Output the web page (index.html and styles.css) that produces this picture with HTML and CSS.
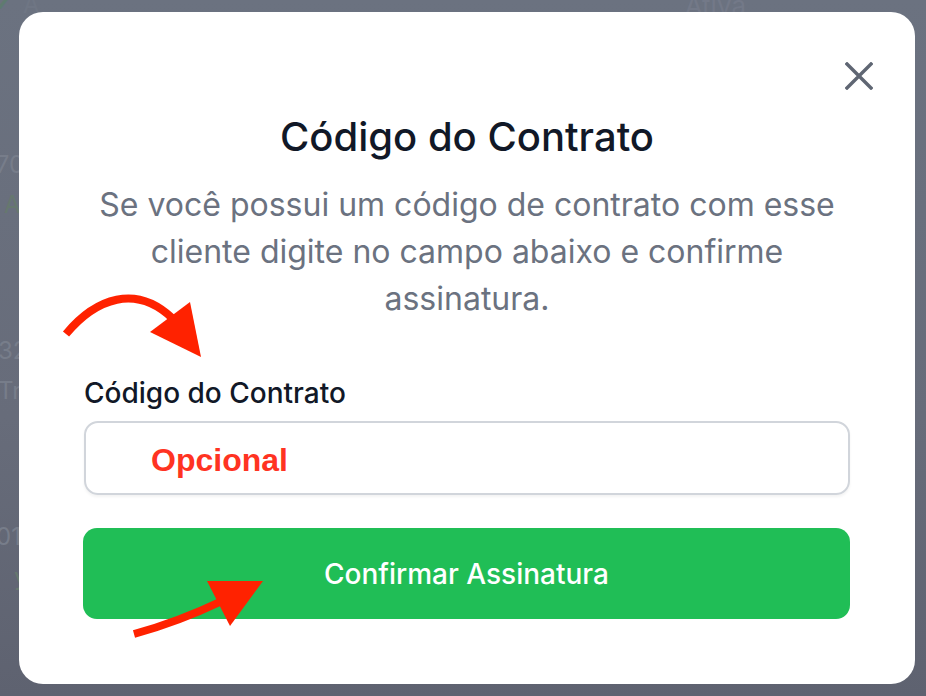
FILE: index.html
```html
<!DOCTYPE html>
<html lang="pt-BR">
<head>
<meta charset="utf-8">
<title>Código do Contrato</title>
<link rel="stylesheet" href="styles.css">
</head>
<body>
<div class="backdrop">
  <div class="bd-top"><span class="bd-check">✔</span><span class="bd-a">A</span><span class="bd-status">Ativa</span></div>
  <div class="bd-row bd-r1"><span>170</span><span class="bd-green">A</span></div>
  <div class="bd-row bd-r2"><span>32</span><span>Tr</span></div>
  <div class="bd-row bd-r3"><span>01</span><span class="bd-green">y A</span></div>
  <div class="bd-bottom"><span class="bd-ring"></span></div>
</div>
<div class="overlay">
  <div class="modal">
    <button class="close" aria-label="Fechar">
      <svg width="28" height="28" viewBox="0 0 28 28"><path d="M2 2L26 26M26 2L2 26" stroke="#5f6673" stroke-width="3.4" stroke-linecap="square"/></svg>
    </button>
    <h2 class="title">Código do Contrato</h2>
    <p class="desc">Se você possui um código de contrato com esse cliente digite no campo abaixo e confirme assinatura.</p>
    <label class="label" for="code">Código do Contrato</label>
    <div class="input"><span class="placeholder">Opcional</span></div>
    <button class="confirm">Confirmar Assinatura</button>
  </div>
</div>
<svg class="annot" width="926" height="696" viewBox="0 0 926 696">
  <path d="M66 334 C 96 298 136 284 172 318" fill="none" stroke="#ff2200" stroke-width="8"/>
  <polygon points="190,302 150,332 201,357" fill="#ff2200"/>
  <path d="M134 634 Q 178 622 222 601" fill="none" stroke="#ff2200" stroke-width="8"/>
  <polygon points="207,581 263,581 230,626" fill="#ff2200"/>
</svg>
</body>
</html>
```
FILE: styles.css
```css
* { box-sizing: border-box; }
html, body { margin: 0; padding: 0; }
body {
  width: 926px;
  height: 696px;
  overflow: hidden;
  font-family: Inter, "Noto Sans", sans-serif;
  background: linear-gradient(180deg, #6b7280 0%, #676c7a 60%, #5e6270 100%);
}
.backdrop {
  height: 696px;
  display: flex;
  flex-direction: column;
  color: #777d8a;
  font-size: 24px;
}
.bd-top {
  display: flex;
  align-items: flex-start;
  height: 160px;
  margin-top: -10px;
}
.bd-check { color: #5f7b70; margin-left: -6px; width: 29px; font-size: 22px; }
.bd-a { color: #6f7684; }
.bd-status { margin-left: auto; margin-right: 180px; color: #737988; font-size: 26px; }
.bd-row {
  display: flex;
  flex-direction: column;
  gap: 10px;
  margin-left: -14px;
  line-height: 30px;
}
.bd-r1 { height: 186px; }
.bd-r2 { height: 186px; margin-left: -2px; }
.bd-r3 { height: 130px; margin-left: -4px; }
.bd-green { color: #66786f; padding-left: 18px; }
.bd-bottom { display: flex; padding-left: 683px; }
.bd-ring { width: 20px; height: 20px; border: 4px solid #6a6f7c; border-radius: 50%; }

.overlay {
  position: fixed;
  inset: 0;
  display: flex;
  align-items: center;
  justify-content: center;
  padding-left: 8px;
}
.modal {
  position: relative;
  width: 896px;
  height: 672px;
  background: #fff;
  border-radius: 24px;
  padding: 101px 65px 65px 65px;
  display: flex;
  flex-direction: column;
}
.close {
  position: absolute;
  top: 50px;
  right: 42px;
  border: 0;
  background: none;
  padding: 0;
  width: 28px;
  height: 28px;
  display: flex;
}
.title {
  margin: 0;
  text-align: center;
  font-size: 40px;
  line-height: 48px;
  font-weight: 500;
  color: #111827;
}
.desc {
  margin: 20px 0 0;
  text-align: center;
  font-size: 32px;
  line-height: 47px;
  color: #6b7280;
  padding: 0 8px;
}
.label {
  margin-top: 55px;
  font-size: 28px;
  line-height: 32px;
  font-weight: 500;
  color: #111827;
}
.input {
  margin-top: 12px;
  height: 74px;
  border: 2px solid #d1d5db;
  border-radius: 14px;
  display: flex;
  align-items: center;
  padding: 5px 0 0 65px;
  box-shadow: 0 2px 3px rgba(0,0,0,0.05);
}
.placeholder {
  font-family: "Liberation Sans", Arial, sans-serif;
  font-weight: 700;
  font-size: 32px;
  color: #ff3322;
}
.confirm {
  margin-top: 33px;
  height: 91px;
  margin-left: -1px;
  border: 0;
  border-radius: 14px;
  background: #20be56;
  color: #fff;
  font-family: Inter, "Noto Sans", sans-serif;
  font-size: 28px;
  font-weight: 500;
}
.annot {
  position: fixed;
  left: 0;
  top: 0;
  pointer-events: none;
}
```
